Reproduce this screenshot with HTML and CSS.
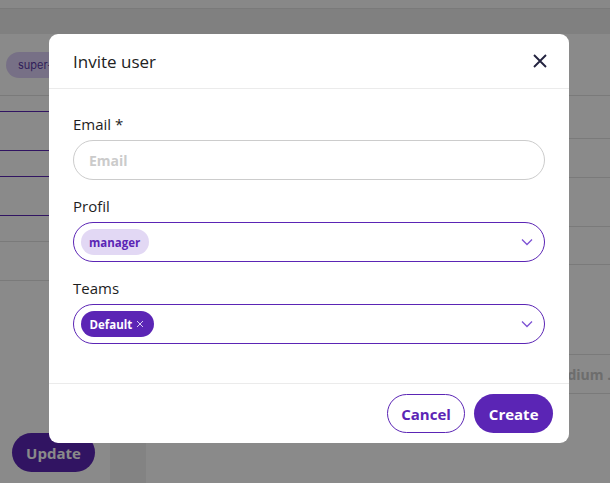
FILE: index.html
```html
<!DOCTYPE html>
<html lang="en">
<head>
    <meta charset="UTF-8">
    <meta name="viewport" content="width=device-width, initial-scale=1.0">
    <title>Invite user</title>
    <link rel="stylesheet" href="styles.css">
</head>
<body>

    <div class="page">
        <div class="topbar"></div>
        <div class="subbar"></div>
        <div class="content">
            <div class="left-panel">
                <div class="row tag-row line-grey"><span class="role-tag">super-admin</span></div>
                <div class="row h16 line-purple"></div>
                <div class="row h39 line-purple"></div>
                <div class="row h26 line-purple"></div>
                <div class="row h39 line-purple"></div>
                <div class="row h26 line-grey"></div>
                <div class="row h39 line-grey"></div>
                <button class="btn btn-primary update-btn">Update</button>
            </div>
            <div class="strip"></div>
            <div class="right-panel">
                <div class="row tag-row line-grey"></div>
                <div class="row h43 line-grey"></div>
                <div class="row h39 line-grey"></div>
                <div class="row h49 line-grey"></div>
                <div class="row h38 line-grey"></div>
                <div class="row h90 line-grey"></div>
                <div class="row h39 line-grey">
                    <div class="cell-grow"></div>
                    <div class="cell-priority">Medium ...</div>
                </div>
            </div>
        </div>
    </div>

    <div class="overlay"></div>

    <div class="modal">
        <div class="modal-header">
            <h2 class="modal-title">Invite user</h2>
            <button class="close-button" aria-label="Close">
                <svg width="14" height="14" viewBox="0 0 14 14">
                    <path d="M1 1 L13 13 M13 1 L1 13" stroke="#23233f" stroke-width="1.9" fill="none"/>
                </svg>
            </button>
        </div>

        <div class="modal-body">
            <label class="field-label">Email *</label>
            <input type="text" class="text-input" placeholder="Email">

            <label class="field-label spaced">Profil</label>
            <div class="select-box">
                <span class="chip chip-light">manager</span>
                <svg class="chevron" width="12" height="8" viewBox="0 0 12 8">
                    <path d="M1 1.5 L6 6.5 L11 1.5" stroke="#7d52d4" stroke-width="1.3" fill="none"/>
                </svg>
            </div>

            <label class="field-label spaced">Teams</label>
            <div class="select-box">
                <span class="chip chip-dark">Default
                    <svg class="chip-remove" width="8" height="8" viewBox="0 0 8 8">
                        <path d="M1 1 L7 7 M7 1 L1 7" stroke="#d9ccf3" stroke-width="1" fill="none"/>
                    </svg>
                </span>
                <svg class="chevron" width="12" height="8" viewBox="0 0 12 8">
                    <path d="M1 1.5 L6 6.5 L11 1.5" stroke="#7d52d4" stroke-width="1.3" fill="none"/>
                </svg>
            </div>
        </div>

        <div class="modal-footer">
            <button class="btn btn-outline">Cancel</button>
            <button class="btn btn-primary btn-create">Create</button>
        </div>
    </div>

</body>
</html>
```

FILE: styles.css
```css
* {
    box-sizing: border-box;
}
body {
    font-family: "Open Sans", Arial, sans-serif;
    margin: 0;
    padding: 0;
    background-color: #ffffff;
    width: 610px;
    height: 483px;
    overflow: hidden;
}
.page {
    display: flex;
    flex-direction: column;
    height: 483px;
}
.topbar {
    height: 8px;
    background-color: #fbfbfb;
}
.subbar {
    height: 26px;
    background-color: #ececec;
    border-top: 1px solid #e2e2e2;
}
.content {
    flex: 1;
    display: flex;
}
.left-panel {
    width: 110px;
    display: flex;
    flex-direction: column;
}
.strip {
    width: 36px;
    background-color: #f2f2f2;
}
.right-panel {
    flex: 1;
    display: flex;
    flex-direction: column;
}
.row {
    display: flex;
    align-items: center;
}
.line-grey {
    border-bottom: 1px solid #e2e2e2;
}
.line-purple {
    border-bottom: 1px solid #5b25b5;
}
.tag-row {
    height: 62px;
    padding-left: 6px;
}
.h16 { height: 16px; }
.h26 { height: 26px; }
.h38 { height: 38px; }
.h39 { height: 39px; }
.h43 { height: 43px; }
.h49 { height: 49px; }
.h90 { height: 90px; }
.role-tag {
    display: inline-flex;
    align-items: center;
    height: 26px;
    padding: 0 12px;
    border-radius: 13px;
    background-color: #ddd0f7;
    color: #5a3aa8;
    font-family: Inter, sans-serif;
    font-size: 11px;
    white-space: nowrap;
}
.cell-grow {
    flex: 1;
}
.cell-priority {
    width: 64px;
    white-space: nowrap;
    overflow: hidden;
    color: #c9c9c9;
    font-weight: 700;
    font-size: 14px;
}
.update-btn {
    margin: 152px 0 0 12px;
    width: 83px;
}

/* overlay + modal */
.overlay {
    position: fixed;
    top: 0;
    left: 0;
    right: 0;
    bottom: 0;
    background-color: rgba(0, 0, 0, 0.46);
}
.modal {
    position: fixed;
    left: 49px;
    top: 34px;
    width: 520px;
    background-color: white;
    border-radius: 9px;
}
.modal-header {
    height: 55px;
    display: flex;
    align-items: center;
    justify-content: space-between;
    padding: 0 22px 0 24px;
    border-bottom: 1px solid #ebebeb;
}
.modal-title {
    margin: 0;
    font-size: 17px;
    font-weight: 400;
    color: #222;
}
.close-button {
    border: none;
    background: none;
    padding: 0;
    display: flex;
    cursor: pointer;
}
.modal-body {
    padding: 25px 24px 39px 24px;
    display: flex;
    flex-direction: column;
}
.field-label {
    font-size: 15px;
    line-height: 20px;
    color: #1e1e1e;
    margin-bottom: 6px;
}
.field-label.spaced {
    margin-top: 16px;
}
.text-input {
    height: 40px;
    border: 1px solid #cccccc;
    border-radius: 20px;
    padding: 0 15px;
    font-family: "Open Sans", Arial, sans-serif;
    font-size: 14px;
    font-weight: 700;
    outline: none;
}
.text-input::placeholder {
    color: #cbcbcb;
}
.select-box {
    height: 40px;
    border: 1.5px solid #5b25b5;
    border-radius: 20px;
    padding: 0 11px 0 6.5px;
    display: flex;
    align-items: center;
    justify-content: space-between;
}
.chip {
    display: inline-flex;
    align-items: center;
    height: 26px;
    border-radius: 13px;
    font-size: 11.5px;
    font-weight: 700;
}
.chip-light {
    padding: 0 8.5px;
    background-color: #e2d8f4;
    color: #5b25b5;
}
.chip-dark {
    padding: 0 10px 0 9px;
    background-color: #5b25b5;
    color: white;
    gap: 4px;
}
.modal-footer {
    border-top: 1px solid #ebebeb;
    padding: 10px 16px;
    display: flex;
    justify-content: flex-end;
    gap: 9px;
}
.btn {
    height: 39px;
    padding: 0 13.5px;
    border-radius: 20px;
    font-family: "Open Sans", Arial, sans-serif;
    font-size: 15px;
    font-weight: 700;
    cursor: pointer;
}
.btn-outline {
    border: 1px solid #5b25b5;
    background-color: white;
    color: #5b25b5;
}
.btn-primary {
    border: none;
    background-color: #5b25b5;
    color: white;
}
.btn-create {
    padding: 0 14.5px;
}
```
